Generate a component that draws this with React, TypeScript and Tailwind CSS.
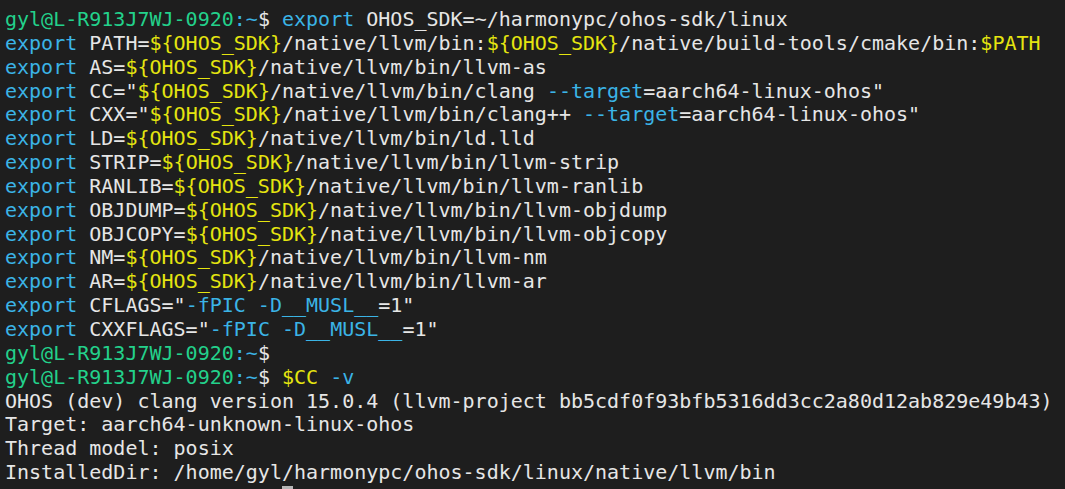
import React from "react";

type Seg = [string, string];
const G = "text-[#23d18b]";
const B = "text-[#3bb4e6]";
const Y = "text-[#e5e510]";
const W = "text-[#e6e6e6]";
const S = "${OHOS_SDK}";

const prompt: Seg[] = [
  [G, "gyl@L-R913J7WJ-0920"],
  [B, ":~"],
  [W, "$"],
];

const exp = (name: string, rest: Seg[]): Seg[] => [[B, "export"], [W, ` ${name}=`], ...rest];

const lines: Seg[][] = [
  [...prompt, [W, " "], [B, "export"], [W, " OHOS_SDK=~/harmonypc/ohos-sdk/linux"]],
  exp("PATH", [[Y, S], [W, "/native/llvm/bin:"], [Y, S], [W, "/native/build-tools/cmake/bin:"], [Y, "$PATH"]]),
  exp("AS", [[Y, S], [W, "/native/llvm/bin/llvm-as"]]),
  exp("CC", [[W, '"'], [Y, S], [W, "/native/llvm/bin/clang "], [B, "--target"], [W, '=aarch64-linux-ohos"']]),
  exp("CXX", [[W, '"'], [Y, S], [W, "/native/llvm/bin/clang++ "], [B, "--target"], [W, '=aarch64-linux-ohos"']]),
  exp("LD", [[Y, S], [W, "/native/llvm/bin/ld.lld"]]),
  exp("STRIP", [[Y, S], [W, "/native/llvm/bin/llvm-strip"]]),
  exp("RANLIB", [[Y, S], [W, "/native/llvm/bin/llvm-ranlib"]]),
  exp("OBJDUMP", [[Y, S], [W, "/native/llvm/bin/llvm-objdump"]]),
  exp("OBJCOPY", [[Y, S], [W, "/native/llvm/bin/llvm-objcopy"]]),
  exp("NM", [[Y, S], [W, "/native/llvm/bin/llvm-nm"]]),
  exp("AR", [[Y, S], [W, "/native/llvm/bin/llvm-ar"]]),
  exp("CFLAGS", [[W, '"'], [B, "-fPIC -D__MUSL__"], [W, '=1"']]),
  exp("CXXFLAGS", [[W, '"'], [B, "-fPIC -D__MUSL__"], [W, '=1"']]),
  [...prompt],
  [...prompt, [W, " "], [Y, "$CC"], [B, " -v"]],
  [[W, "OHOS (dev) clang version 15.0.4 (llvm-project bb5cdf0f93bfb5316dd3cc2a80d12ab829e49b43)"]],
  [[W, "Target: aarch64-unknown-linux-ohos"]],
  [[W, "Thread model: posix"]],
  [[W, "InstalledDir: /home/gyl/harmonypc/ohos-sdk/linux/native/llvm/bin"]],
];

export default function App() {
  return (
    <div
      className="w-[1065px] h-[489px] overflow-hidden bg-[#1e1e1e] pl-[5px] pt-[8px] text-[20px] leading-[23.85px] whitespace-pre"
      style={{ fontFamily: '"DejaVu Sans Mono", "Liberation Mono", monospace' }}
    >
      {lines.map((line, i) => (
        <div key={i} className="h-[23.85px]">
          {line.map(([c, t], j) => (
            <span key={j} className={c}>
              {t}
            </span>
          ))}
        </div>
      ))}
      <div className="h-[23.85px] flex items-start">
        <span className="w-[277px]" />
        <span className="mt-[1px] w-[11px] h-[22px] bg-[#b5b5b5]" />
      </div>
    </div>
  );
}
